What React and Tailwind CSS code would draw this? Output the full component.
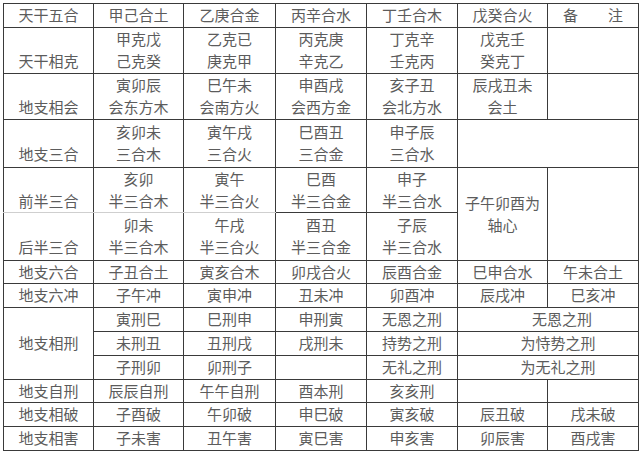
// 干支合冲刑破害 - reference table
const LINE = 'h-[22px] leading-[22px]';

function Two({ a, b }) {
  return (
    <>
      <div className={LINE}>{a}</div>
      <div className={LINE}>{b}</div>
    </>
  );
}

function Label({ text }) {
  // label sits on the second line of a two-line row
  return <Two a={'\u00a0'} b={text} />;
}

const td = 'border border-[#3a3a3a] text-center align-middle p-0 whitespace-nowrap';
const soft = 'border border-[#3a3a3a] border-b-[#cfcfcf] text-center align-middle p-0 whitespace-nowrap';

const SINGLE_ROWS = [
  { h: 'h-[23px]', cells: ['地支六合', '子丑合土', '寅亥合木', '卯戌合火', '辰酉合金', '巳申合水', '午未合土'] },
  { h: 'h-[24px]', cells: ['地支六冲', '子午冲', '寅申冲', '丑未冲', '卯酉冲', '辰戌冲', '巳亥冲'] },
];

const BOTTOM_ROWS = [
  { h: 'h-[23px]', cells: ['地支自刑', '辰辰自刑', '午午自刑', '酉本刑', '亥亥刑', '', ''] },
  { h: 'h-[24px]', cells: ['地支相破', '子酉破', '午卯破', '申巳破', '寅亥破', '辰丑破', '戌未破'] },
  { h: 'h-[24px]', cells: ['地支相害', '子未害', '丑午害', '寅巳害', '申亥害', '卯辰害', '酉戌害'] },
];

export default function App() {
  return (
    <div
      className="w-[642px] h-[453px] bg-white pt-[3px] pl-[3px] overflow-hidden text-[15px] text-[#5c5c5c]"
      style={{ fontFamily: '"Noto Sans CJK SC", "Noto Sans", sans-serif' }}
    >
      <table className="border-collapse table-fixed w-[635px]">
        <colgroup>
          <col className="w-[90px]" />
          <col className="w-[90px]" />
          <col className="w-[92px]" />
          <col className="w-[91px]" />
          <col className="w-[91px]" />
          <col className="w-[90px]" />
          <col className="w-[91px]" />
        </colgroup>
        <tbody>
          <tr className="h-[23px]">
            {['天干五合', '甲己合土', '乙庚合金', '丙辛合水', '丁壬合木', '戊癸合火', '备\u3000\u3000注'].map((t, i) => (
              <td key={i} className={td}>{t}</td>
            ))}
          </tr>
          <tr className="h-[46px]">
            <td className={td}><Label text="天干相克" /></td>
            <td className={td}><Two a="甲克戊" b="己克癸" /></td>
            <td className={td}><Two a="乙克已" b="庚克甲" /></td>
            <td className={td}><Two a="丙克庚" b="辛克乙" /></td>
            <td className={td}><Two a="丁克辛" b="壬克丙" /></td>
            <td className={td}><Two a="戊克壬" b="癸克丁" /></td>
            <td className={td}></td>
          </tr>
          <tr className="h-[46px]">
            <td className={td}><Label text="地支相会" /></td>
            <td className={td}><Two a="寅卯辰" b="会东方木" /></td>
            <td className={td}><Two a="巳午未" b="会南方火" /></td>
            <td className={td}><Two a="申酉戌" b="会西方金" /></td>
            <td className={td}><Two a="亥子丑" b="会北方水" /></td>
            <td className={td}><Two a="辰戌丑未" b="会土" /></td>
            <td className={td}></td>
          </tr>
          <tr className="h-[48px]">
            <td className={td}><Label text="地支三合" /></td>
            <td className={td}><Two a="亥卯未" b="三合木" /></td>
            <td className={td}><Two a="寅午戌" b="三合火" /></td>
            <td className={td}><Two a="巳酉丑" b="三合金" /></td>
            <td className={td}><Two a="申子辰" b="三合水" /></td>
            <td className={td} colSpan={2}></td>
          </tr>
          <tr className="h-[44px]">
            <td className={soft}><Label text="前半三合" /></td>
            <td className={soft}><Two a="亥卯" b="半三合木" /></td>
            <td className={soft}><Two a="寅午" b="半三合火" /></td>
            <td className={td}><Two a="巳酉" b="半三合金" /></td>
            <td className={td}><Two a="申子" b="半三合水" /></td>
            <td className={td} rowSpan={2}><Two a="子午卯酉为" b="轴心" /></td>
            <td className={td} rowSpan={2}></td>
          </tr>
          <tr className="h-[48px]">
            <td className={td}><Label text="后半三合" /></td>
            <td className={td}><Two a="卯未" b="半三合木" /></td>
            <td className={td}><Two a="午戌" b="半三合火" /></td>
            <td className={td}><Two a="酉丑" b="半三合金" /></td>
            <td className={td}><Two a="子辰" b="半三合水" /></td>
          </tr>
          {SINGLE_ROWS.map((r) => (
            <tr key={r.cells[0]} className={r.h}>
              {r.cells.map((t, i) => (
                <td key={i} className={td}>{t}</td>
              ))}
            </tr>
          ))}
          <tr className="h-[24px]">
            <td className={td} rowSpan={3}>地支相刑</td>
            <td className={td}>寅刑巳</td>
            <td className={td}>巳刑申</td>
            <td className={td}>申刑寅</td>
            <td className={td}>无恩之刑</td>
            <td className={`${td} pl-[28px]`} colSpan={2}>无恩之刑</td>
          </tr>
          <tr className="h-[23px]">
            <td className={td}>未刑丑</td>
            <td className={td}>丑刑戌</td>
            <td className={td}>戌刑未</td>
            <td className={td}>持势之刑</td>
            <td className={`${td} pl-[20px]`} colSpan={2}>为恃势之刑</td>
          </tr>
          <tr className="h-[24px]">
            <td className={td}>子刑卯</td>
            <td className={td}>卯刑子</td>
            <td className={td}></td>
            <td className={td}>无礼之刑</td>
            <td className={`${td} pl-[20px]`} colSpan={2}>为无礼之刑</td>
          </tr>
          {BOTTOM_ROWS.map((r) => (
            <tr key={r.cells[0]} className={r.h}>
              {r.cells.map((t, i) => (
                <td key={i} className={td}>{t}</td>
              ))}
            </tr>
          ))}
        </tbody>
      </table>
    </div>
  );
}
